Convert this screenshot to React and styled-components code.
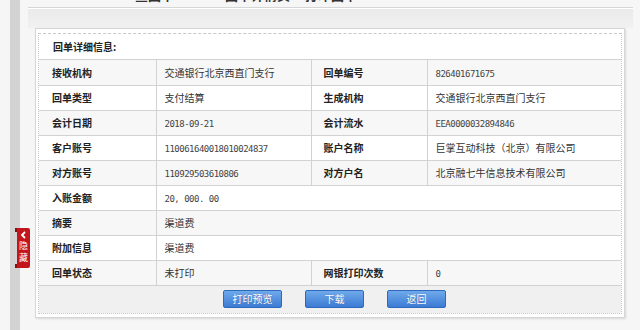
import React from 'react';
import styled, {createGlobalStyle} from 'styled-components';

const GlobalStyle = createGlobalStyle`
  html, body {
    margin: 0;
    padding: 0;
    background: #f5f5f5;
  }
  body {
    font-family: "Noto Sans CJK SC", "Liberation Sans", sans-serif;
  }
`;

const Page = styled.div`
  position: relative;
  display: flex;
  width: 640px;
  height: 330px;
  overflow: hidden;
`;

const LeftEdge = styled.div`
  width: 10px;
  flex: none;
  background: #f6f6f6;
`;

const Rail = styled.div`
  width: 10px;
  flex: none;
  background: #d3d3d3;
`;

const Main = styled.div`
  flex: 1;
  display: flex;
  flex-direction: column;
  background: #f6f6f6;
`;

const Crumbs = styled.div`
  height: 7px;
  margin: 0 7px 0 8px;
  padding-left: 107px;
  display: flex;
  overflow: hidden;
  border-bottom: 1px solid #d6d6d6;
  box-shadow: 0 1px 0 #ffffff;
`;

const Crumb = styled.span`
  margin-top: -13px;
  margin-left: ${props => props.space || 0}px;
  font-size: 13px;
  line-height: 16px;
  font-weight: bold;
  color: #333;
  white-space: nowrap;
`;

const Band = styled.div`
  height: 19px;
  margin: 1px 7px 0 8px;
  background: linear-gradient(#eaeaea, #f1f1f1);
`;

const Panel = styled.div`
  margin-left: 15px;
  width: 584px;
  padding: 4px 2px 3px 2px;
  background: #ffffff;
  border: 1px solid #d6d6d6;
  box-shadow: 1px 1px 2px rgba(0, 0, 0, 0.12);
`;

const Inner = styled.div`
  border: 1px dotted #c8c8c8;
  border-top-style: dashed;
`;

const Title = styled.div`
  height: 25px;
  padding-left: 14px;
  display: flex;
  align-items: center;
  font-size: 10px;
  font-weight: bold;
  color: #222;
  border-bottom: 1px solid #d2d2d2;
`;

const Table = styled.table`
  width: 582px;
  border-collapse: collapse;
  table-layout: fixed;
`;

const Row = styled.tr`
  height: 25px;
  background: ${props => props.shade ? '#f7f7f7' : '#ffffff'};
  border-bottom: 1px solid #d2d2d2;
`;

const Label = styled.td`
  padding: 0 0 0 ${props => props.indent || 13}px;
  font-size: 10px;
  font-weight: bold;
  color: #222;
  border-right: 1px solid #d2d2d2;
  white-space: nowrap;
`;

const Value = styled.td`
  padding: 0 0 0 8px;
  font-size: 10px;
  color: #333;
  border-right: 1px solid #d2d2d2;
  white-space: nowrap;
  &:last-child {
    border-right: none;
  }
`;

const Num = styled.span`
  font-family: "DejaVu Sans Mono", "Liberation Mono", monospace;
  font-size: 9px;
  letter-spacing: -0.5px;
  color: #444;
`;

const Actions = styled.div`
  height: 27px;
  display: flex;
  align-items: center;
  justify-content: center;
  gap: 23px;
  padding-left: 9px;
  background: #f0f0f0;
`;

const Button = styled.button`
  width: 59px;
  height: 18px;
  padding: 0;
  border: 1px solid #2f69bd;
  border-radius: 2px;
  background: linear-gradient(#6fa9ec, #3c7bd4);
  color: #ffffff;
  font-family: "Noto Sans CJK SC", sans-serif;
  font-size: 10px;
  line-height: 16px;
  text-shadow: 0 0 1px rgba(0, 0, 0, 0.25);
  cursor: pointer;
`;

const HideTab = styled.div`
  position: absolute;
  left: 17px;
  top: 228px;
  width: 13px;
  height: 40px;
  display: flex;
  flex-direction: column;
  align-items: center;
  gap: 1px;
  padding-top: 3px;
  box-sizing: border-box;
  background: #c3161c;
  border-radius: 0 2px 2px 0;
  color: #ffffff;
  font-size: 9px;
  line-height: 11px;
  &::before, &::after {
    content: '';
    position: absolute;
    left: -2px;
    width: 2px;
    height: 4px;
    background: #8a0e12;
  }
  &::before { top: 0; }
  &::after { bottom: 0; }
`;

const rows = [
  ['接收机构', '交通银行北京西直门支行', '回单编号', <Num>826401671675</Num>],
  ['回单类型', '支付结算', '生成机构', '交通银行北京西直门支行'],
  ['会计日期', <Num>2018-09-21</Num>, '会计流水', <Num>EEA0000032894846</Num>],
  ['客户账号', <Num>110061640018010024837</Num>, '账户名称', '巨掌互动科技（北京）有限公司'],
  ['对方账号', <Num>110929503610806</Num>, '对方户名', '北京融七牛信息技术有限公司'],
  ['入账金额', <Num>20, 000. 00</Num>],
  ['摘要', '渠道费'],
  ['附加信息', '渠道费'],
  ['回单状态', '未打印', '网银打印次数', <Num>0</Num>],
];

export default function App() {
  return (
    <>
      <GlobalStyle />
      <Page>
        <LeftEdge />
        <Rail />
        <Main>
          <Crumbs>
            <Crumb>查回单</Crumb>
            <Crumb space={51}>回单详情页</Crumb>
            <Crumb space={15}>打印回单</Crumb>
          </Crumbs>
          <Band />
          <Panel>
            <Inner>
              <Title>回单详细信息:</Title>
              <Table>
                <colgroup>
                  <col style={{width: 117}} />
                  <col style={{width: 155}} />
                  <col style={{width: 116}} />
                  <col style={{width: 194}} />
                </colgroup>
                <tbody>
                  {rows.map((r, i) => (
                    <Row key={i} shade={i % 2 === 0}>
                      <Label>{r[0]}</Label>
                      {r.length > 2 ? (
                        <>
                          <Value>{r[1]}</Value>
                          <Label indent={12}>{r[2]}</Label>
                          <Value>{r[3]}</Value>
                        </>
                      ) : (
                        <Value colSpan={3}>{r[1]}</Value>
                      )}
                    </Row>
                  ))}
                </tbody>
              </Table>
              <Actions>
                <Button>打印预览</Button>
                <Button>下载</Button>
                <Button>返回</Button>
              </Actions>
            </Inner>
          </Panel>
        </Main>
        <HideTab>
          <svg width="7" height="8" viewBox="0 0 7 8">
            <polyline points="5,1 2,4 5,7" fill="none" stroke="#fff" strokeWidth="1.8" />
          </svg>
          <span>隐</span>
          <span>藏</span>
        </HideTab>
      </Page>
    </>
  );
}
